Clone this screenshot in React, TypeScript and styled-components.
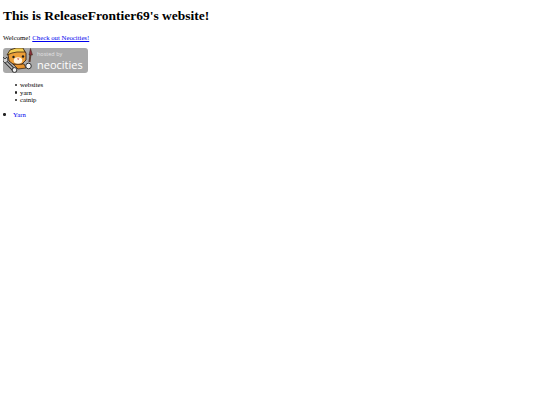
import React from "react";
import styled, { createGlobalStyle } from "styled-components";

const GlobalStyle = createGlobalStyle`
  html, body {
    margin: 0;
    background: #ffffff;
  }
  body {
    padding: 0 3px;
    font-family: "Liberation Serif", "Times New Roman", serif;
    font-size: 6.75px;
    line-height: 7.5px;
    color: #000000;
  }
`;

const Title = styled.h1`
  margin: 0;
  padding-top: 8px;
  font-size: 13.5px;
  line-height: 16px;
  font-weight: bold;
`;

const Intro = styled.p`
  margin: 10px 0 0;
  line-height: 8px;
`;

const Link = styled.a`
  color: #0000ee;
  text-decoration: underline;
`;

const Badge = styled.a`
  display: flex;
  align-items: center;
  width: 85px;
  height: 25px;
  margin-top: 6px;
  border-radius: 3px;
  background: #a9a9a9;
  overflow: hidden;
  text-decoration: none;
`;

const BadgeText = styled.div`
  display: flex;
  flex-direction: column;
  margin-left: 1px;
  padding-top: 1px;
  color: #ffffff;
`;

const HostedBy = styled.span`
  font-family: "Open Sans", "Liberation Sans", sans-serif;
  font-size: 5.5px;
  line-height: 7px;
  color: #e2e2e2;
`;

const Neocities = styled.span`
  font-family: "Open Sans", "Liberation Sans", sans-serif;
  font-size: 11px;
  line-height: 13px;
`;

const List = styled.ul<{ $indent: number; $top: number }>`
  margin: ${(p) => p.$top}px 0 0;
  padding-left: ${(p) => p.$indent}px;
  list-style: none;
`;

const Item = styled.li<{ $gap: number }>`
  display: flex;
  align-items: center;
  gap: ${(p) => p.$gap}px;
  line-height: 7.5px;

  &::before {
    content: "";
    width: 2.5px;
    height: 2.5px;
    border-radius: 50%;
    background: #222222;
  }
`;

function CatLogo() {
  return (
    <svg width="33" height="25" viewBox="0 0 33 25" style={{ flexShrink: 0 }}>
      {/* wrench */}
      <path d="M2 13 L11 22" stroke="#2e2e2e" strokeWidth="3.4" fill="none" />
      <path d="M2 13 L11 22" stroke="#bdbdbd" strokeWidth="1.6" fill="none" />
      <path d="M0 9 L2 11 L4 9 L5 13 L2 15 L0 13 Z" fill="#cfcfcf" stroke="#2e2e2e" strokeWidth="0.8" />
      <circle cx="11.5" cy="22" r="2.4" fill="#f4f4f4" stroke="#2e2e2e" strokeWidth="1" />
      {/* body */}
      <path d="M10 16 L21 16 L23 20 L15 21 Z" fill="#e8952f" stroke="#3a2412" strokeWidth="0.8" />
      {/* head */}
      <path d="M5 6 L8 2 L20 1 L23 5 L23 12 L19 16 L10 16 L6 13 Z" fill="#ec9f38" stroke="#3a2412" strokeWidth="0.9" />
      {/* helmet */}
      <path d="M4 7 L7 2 L13 0 L20 0 L22 4 L14 4 L9 5 Z" fill="#f3cf55" stroke="#3a2412" strokeWidth="0.8" />
      {/* muzzle and face */}
      <ellipse cx="15" cy="12.5" rx="4.2" ry="3.2" fill="#fff3df" />
      <circle cx="10.5" cy="9" r="1.2" fill="#1f1f1f" />
      <circle cx="20" cy="8.5" r="1.2" fill="#1f1f1f" />
      <path d="M14 10.5 H16.4 L15.2 12 Z" fill="#b93a3a" />
      {/* brush */}
      <path d="M26.5 14 L27.5 6" stroke="#5a3a2e" strokeWidth="2" />
      <path d="M26 7 L27.5 0.5 L29.5 7 Z" fill="#8a2f3a" stroke="#3a2412" strokeWidth="0.5" />
      <circle cx="25.5" cy="18" r="2.8" fill="#f6f6f6" stroke="#2e2e2e" strokeWidth="1" />
    </svg>
  );
}

export default function App() {
  return (
    <>
      <GlobalStyle />
      <Title>This is ReleaseFrontier69's website!</Title>
      <Intro>
        Welcome! <Link href="#">Check out Neocities!</Link>
      </Intro>
      <Badge href="#">
        <CatLogo />
        <BadgeText>
          <HostedBy>hosted by</HostedBy>
          <Neocities>neocities</Neocities>
        </BadgeText>
      </Badge>
      <List $indent={11.5} $top={8}>
        <Item $gap={3}>websites</Item>
        <Item $gap={3}>yarn</Item>
        <Item $gap={3}>catnip</Item>
      </List>
      <List $indent={0} $top={7}>
        <Item $gap={7.5}>
          <Link href="#">Yarn</Link>
        </Item>
      </List>
    </>
  );
}
